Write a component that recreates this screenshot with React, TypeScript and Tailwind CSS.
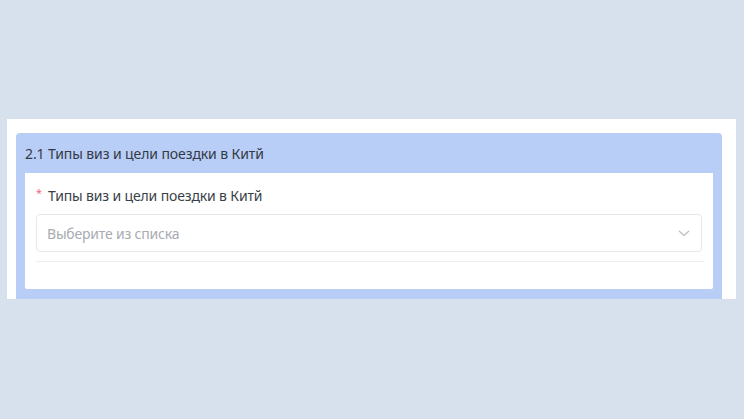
export default function App() {
  return (
    <div className="min-h-[419px] w-[744px] bg-[#d6e1ed] pt-[119px] pl-[7px] pr-[8px]" style={{ fontFamily: '"Noto Sans", sans-serif' }}>
      <div className="h-[180px] bg-white pl-[9px] pr-[14px] pt-[14px]">
        <div className="h-[166px] rounded-t-[4px] bg-[#b9cef7] px-[9px] pb-[10px] flex flex-col">
          <div className="h-[40px] flex items-center text-[14px] text-[#333a45] tracking-[-0.1px]">
            2.1 Типы виз и цели поездки в Китй
          </div>
          <div className="flex-1 bg-white rounded-b-[2px] pl-[11px] pr-[11px] pt-[12px]">
            <div className="flex items-center h-[20px] text-[14px] text-[#3a3f47] tracking-[-0.15px]">
              <span className="text-[#f06a7e] text-[11px] w-[12px] -mt-[4px]">*</span>
              <span>Типы виз и цели поездки в Китй</span>
            </div>
            <div className="mt-[9px] h-[38px] rounded-[4px] border border-[#e6e8ec] flex items-center justify-between pl-[10px] pr-[11px]">
              <span className="text-[14px] text-[#a8abb2] tracking-[-0.2px]">Выберите из списка</span>
              <svg width="12" height="7" viewBox="0 0 12 7" fill="none">
                <path d="M1 1l5 4.5L11 1" stroke="#b8bcc4" strokeWidth="1.1" />
              </svg>
            </div>
            <div className="mt-[9px] h-px bg-[#eceef1] mr-[-2px]" />
          </div>
        </div>
      </div>
    </div>
  );
}
